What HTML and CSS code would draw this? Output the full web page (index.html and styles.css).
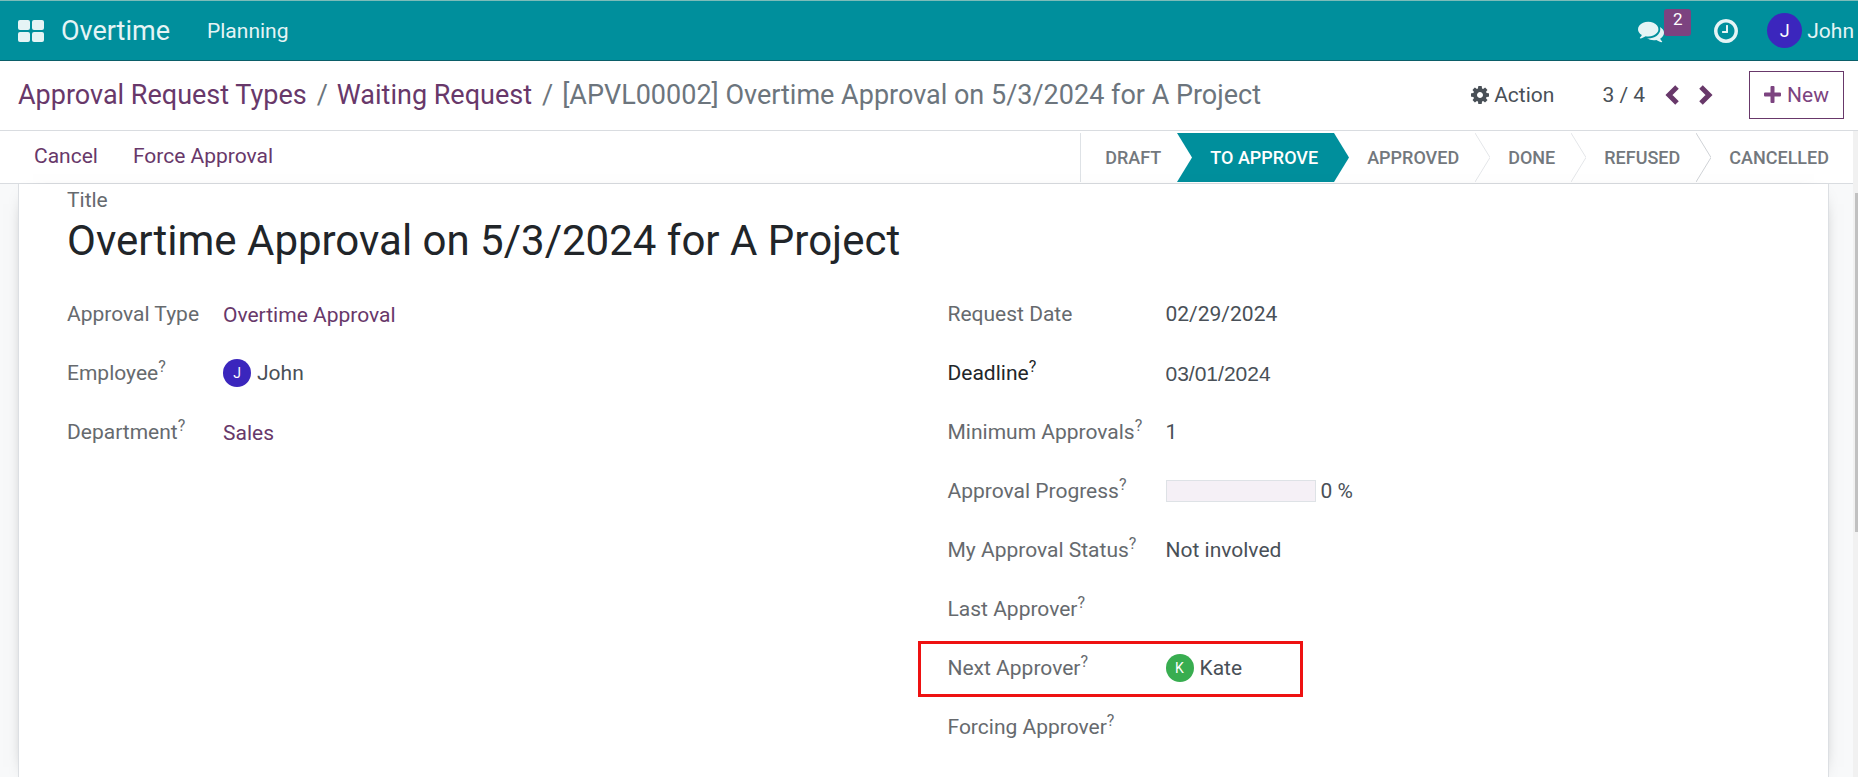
FILE: index.html
```html
<!DOCTYPE html>
<html lang="en">
<head>
<meta charset="utf-8">
<meta name="viewport" content="width=device-width, initial-scale=1">
<title>Overtime Approval</title>
<link rel="stylesheet" href="styles.css">
</head>
<body>
<header class="navbar">
  <button class="icon-button apps" aria-label="Apps">
    <svg width="26" height="22" viewBox="0 0 26 22"><g fill="currentColor"><rect width="12" height="10" rx="2"/><rect x="14" width="12" height="10" rx="2"/><rect y="12" width="12" height="10" rx="2"/><rect x="14" y="12" width="12" height="10" rx="2"/></g></svg>
  </button>
  <a class="brand" href="#">Overtime</a>
  <a class="menu-link" href="#">Planning</a>
  <div class="systray">
    <button class="icon-button messages" aria-label="Messages">
      <svg width="26" height="26" viewBox="0 0 1792 1792"><path fill="currentColor" d="M1408 768q0 139-94 257t-256.500 186.500-353.500 68.500q-86 0-176-16-124 88-278 128-36 9-86 16h-3q-11 0-20.500-8t-11.500-21q-1-3-1-6.500t.5-6.500 2-6l2.500-5 3.500-5.500 4-5 4.500-5 4-4.500q5-6 23-25t26-29.500 22.500-29 25-38.500 20.500-44q-124-72-195-177t-71-224q0-139 94-257t256.500-186.500 353.500-68.500 353.500 68.500 256.500 186.500 94 257zm384 256q0 120-71 224.500t-195 176.500q10 24 20.500 44t25 38.500 22.500 29 26 29.500 23 25q1 1 4 4.500t4.500 5 4 5 3.500 5.500l2.500 5 2 6 .5 6.500-1 6.500q-3 14-13 22t-22 7q-50-7-86-16-154-40-278-128-90 16-176 16-271 0-472-132 58 4 88 4 161 0 309-45t264-129q125-92 192-212t67-254q0-77-23-152 129 71 204 178t75 230z"/></svg>
      <span class="badge">2</span>
    </button>
    <button class="icon-button" aria-label="Activities">
      <svg width="24" height="24" viewBox="128 128 1536 1536"><path fill="currentColor" d="M1024 544v448q0 14-9 23t-23 9h-320q-14 0-23-9t-9-23v-64q0-14 9-23t23-9h224v-352q0-14 9-23t23-9h64q14 0 23 9t9 23zm416 352q0-148-73-273t-198-198-273-73-273 73-198 198-73 273 73 273 198 198 273 73 273-73 198-198 73-273zm224 0q0 209-103 385.500t-279.500 279.500-385.500 103-385.500-103-279.500-279.500-103-385.500 103-385.500 279.500-279.500 385.500-103 385.500 103 279.500 279.500 103 385.500z"/></svg>
    </button>
    <button class="icon-button user"><span class="avatar avatar-large">J</span>John</button>
  </div>
</header>

<div class="control-panel">
  <nav class="breadcrumb" aria-label="Breadcrumb">
    <a href="#">Approval Request Types</a><span class="separator">/</span><a href="#">Waiting Request</a><span class="separator">/</span><span>[APVL00002] Overtime Approval on 5/3/2024 for A Project</span>
  </nav>
  <button class="action">
    <svg width="18" height="18" viewBox="128 128 1536 1536"><path fill="currentColor" d="M1152 896q0-106-75-181t-181-75-181 75-75 181 75 181 181 75 181-75 75-181zm512-109v222q0 12-8 23t-20 13l-185 28q-19 54-39 91 35 50 107 138 10 12 10 25t-9 23q-27 37-99 108t-94 71q-12 0-26-9l-138-108q-44 23-91 38-16 136-29 186-7 28-36 28h-222q-14 0-24.500-8.500t-11.500-21.500l-28-184q-49-16-90-37l-141 107q-10 9-25 9-14 0-25-11-126-114-165-168-7-10-7-23 0-12 8-23 15-21 51-66.500t54-70.500q-27-50-41-99l-183-27q-13-2-21-12.500t-8-23.500v-222q0-12 8-23t19-13l186-28q14-46 39-92-40-57-107-138-10-12-10-24 0-10 9-23 26-36 98.500-107.500t94.500-71.500q13 0 26 10l138 107q44-23 91-38 16-136 29-186 7-28 36-28h222q14 0 24.500 8.500t11.500 21.500l28 184q49 16 90 37l142-107q9-9 24-9 13 0 25 10 129 119 165 170 7 8 7 22 0 12-8 23-15 21-51 66.500t-54 70.500q26 50 41 98l183 28q13 2 21 12.500t8 23.500z"/></svg>Action
  </button>
  <div class="pager">
    <span class="pager-count">3 / 4</span>
    <button class="pager-button" aria-label="Previous"><svg width="14" height="20" viewBox="0 0 14 20"><path d="M12 2 4 10l8 8" fill="none" stroke="currentColor" stroke-width="5"/></svg></button>
    <button class="pager-button" aria-label="Next"><svg width="14" height="20" viewBox="0 0 14 20"><path d="m2 2 8 8-8 8" fill="none" stroke="currentColor" stroke-width="5"/></svg></button>
  </div>
  <button class="new-button"><svg width="17" height="17" viewBox="0 0 17 17"><path d="M7.500 0h2q1 0 1 1v5.500H16q1 0 1 1v2q0 1-1 1h-5.500V16q0 1-1 1h-2q-1 0-1-1v-5.500H1q-1 0-1-1v-2q0-1 1-1h5.500V1q0-1 1-1z" fill="currentColor"/></svg>New</button>
</div>

<div class="workspace">
  <main class="form-view">
    <div class="statusbar">
      <div class="status-actions">
        <button>Cancel</button>
        <button>Force Approval</button>
      </div>
      <div class="stages">
        <button class="stage">Draft<svg class="before-current" width="15" height="49" viewBox="0 0 15 49"><path d="M0 0 15 24.500 0 49z" fill="#fff"/></svg></button>
        <button class="stage current" aria-current="step">To Approve<svg width="15" height="49" viewBox="0 0 15 49"><path d="M0 0 15 24.500 0 49z" fill="#008f9c"/></svg></button>
        <button class="stage">Approved<svg width="15" height="49" viewBox="0 0 15 49"><path d="M0 0 15 24.500 0 49" fill="none" stroke="#e4e6e9"/></svg></button>
        <button class="stage">Done<svg width="15" height="49" viewBox="0 0 15 49"><path d="M0 0 15 24.500 0 49" fill="none" stroke="#e4e6e9"/></svg></button>
        <button class="stage">Refused<svg width="15" height="49" viewBox="0 0 15 49"><path d="M0 0 15 24.500 0 49" fill="none" stroke="#cfd2d6"/></svg></button>
        <button class="stage">Cancelled</button>
      </div>
    </div>
    <div class="sheet-background">
      <section class="sheet">
        <div class="title-label">Title</div>
        <h1>Overtime Approval on 5/3/2024 for A Project</h1>
        <div class="groups">
          <div class="group group-left">
            <div class="field"><span class="label">Approval Type</span><a href="#">Overtime Approval</a></div>
            <div class="field"><span class="label">Employee<sup>?</sup></span><span class="person"><span class="avatar">J</span>John</span></div>
            <div class="field"><span class="label">Department<sup>?</sup></span><a href="#">Sales</a></div>
          </div>
          <div class="group group-right">
            <div class="field"><span class="label">Request Date</span><span>02/29/2024</span></div>
            <div class="field"><label class="label required" for="deadline">Deadline<sup>?</sup></label><input id="deadline" type="text" value="03/01/2024"></div>
            <div class="field"><span class="label">Minimum Approvals<sup>?</sup></span><span>1</span></div>
            <div class="field"><span class="label">Approval Progress<sup>?</sup></span><span class="progress"><span class="progress-bar" role="progressbar" aria-label="Approval Progress" aria-valuenow="0"></span>0 %</span></div>
            <div class="field"><span class="label">My Approval Status<sup>?</sup></span><span>Not involved</span></div>
            <div class="field"><span class="label">Last Approver<sup>?</sup></span></div>
            <div class="field highlighted"><span class="label">Next Approver<sup>?</sup></span><span class="person"><span class="avatar avatar-green">K</span>Kate</span></div>
            <div class="field"><span class="label">Forcing Approver<sup>?</sup></span></div>
          </div>
        </div>
      </section>
    </div>
  </main>
  <div class="scroll-track"><div class="scroll-thumb"></div></div>
</div>
</body>
</html>
```

FILE: styles.css
```css
*, *::after { box-sizing: border-box; }

body {
  margin: 0;
  height: 100vh;
  display: flex;
  flex-direction: column;
  overflow: hidden;
  background: #fff;
  color: #495057;
  font-family: Roboto, "Liberation Sans", sans-serif;
  font-size: 21px;
  line-height: 32px;
}

button {
  margin: 0;
  padding: 0;
  border: 0;
  background: none;
  color: inherit;
  font: inherit;
  white-space: nowrap;
  cursor: pointer;
}

svg { display: block; flex: none; }

a { color: #68386a; text-decoration: none; }

/* Top bar */
.navbar {
  flex: none;
  display: flex;
  align-items: center;
  height: 61px;
  padding: 0 4px 0 18px;
  border-top: 1px solid #7dbcb9;
  border-bottom: 1px solid #0b5f69;
  background: #008f9c;
  color: #e5f4f5;
}
.navbar a { color: inherit; }
.icon-button { display: flex; align-items: center; }
.brand { margin-left: 17px; font-size: 27px; }
.menu-link { margin-left: 37px; }
.systray { display: flex; align-items: center; margin-left: auto; }
.messages { position: relative; margin-right: 50px; }
.badge {
  position: absolute;
  left: 26px;
  top: -9px;
  width: 27px;
  height: 27px;
  border-radius: 3px;
  background: #7c4380;
  color: #fff;
  font-size: 17px;
  line-height: 21px;
  text-align: center;
}
.user { gap: 5px; margin-left: 29px; }

.avatar {
  flex: none;
  width: 28px;
  height: 28px;
  border-radius: 50%;
  background: #3b26bd;
  color: #fff;
  font-size: 14px;
  line-height: 29px;
  text-align: center;
}
.avatar-large { width: 35px; height: 35px; font-size: 18px; line-height: 36px; }
.avatar-green { background: #38ad50; }

/* Breadcrumb and pager */
.control-panel {
  flex: none;
  display: flex;
  align-items: center;
  height: 70px;
  padding: 0 14px 2px 18px;
  border-bottom: 1px solid #d9dce0;
}
.breadcrumb {
  display: flex;
  margin-right: auto;
  color: #6c757d;
  font-size: 27px;
  white-space: nowrap;
}
.separator { margin: 0 9px 0 10px; }
.action { display: flex; align-items: center; gap: 5px; }
.pager { display: flex; align-items: center; margin: 0 36px 0 48px; color: #68386a; }
.pager-count { color: #495057; }
.pager-button { margin-left: 20px; }
.new-button {
  display: flex;
  align-items: center;
  gap: 6px;
  height: 48px;
  padding: 0 14px;
  border: 1px solid #68386a;
  color: #7c4380;
}

/* Scrolling area */
.workspace { flex: 1; min-height: 0; display: flex; }
.form-view { flex: 1; min-width: 0; display: flex; flex-direction: column; }
.scroll-track {
  flex: none;
  width: 5px;
  padding: 62px 0 0 2px;
  background: #f1f1f1;
}
.scroll-thumb { height: 58%; background: #c1c1c1; }

.statusbar {
  flex: none;
  display: flex;
  align-items: center;
  justify-content: space-between;
  padding: 2px 0 1px 34px;
  border-bottom: 1px solid #d9dce0;
}
.status-actions { display: flex; gap: 35px; padding-bottom: 3px; color: #68386a; }
.stages { display: flex; border-left: 1px solid #dee2e6; }
.stage {
  display: flex;
  align-items: center;
  gap: 16px;
  padding-left: 18px;
  color: #73787d;
  font-size: 18px;
  font-weight: 500;
  line-height: 49px;
  text-transform: uppercase;
}
.stage:first-child { padding-left: 24px; }
.stage:last-child { padding-right: 24px; }
.current { background: linear-gradient(to left, #fff 15px, #008f9c 15px); color: #fff; }
.before-current { background: #008f9c; }

/* Form sheet */
.sheet-background {
  flex: 1;
  min-height: 0;
  display: flex;
  padding: 0 24px 0 18px;
  background: #f8f9fa;
}
.sheet {
  flex: 1;
  padding: 0 48px;
  border: solid #dcdfe3;
  border-width: 0 1px;
  background: #fff;
  box-shadow: 0 5px 20px -15px #000;
}
.title-label { color: #666a6e; }
h1 {
  margin: 0 0 18px;
  color: #212529;
  font-size: 42px;
  font-weight: 400;
  line-height: 50px;
}
.groups { display: grid; grid-template-columns: 1fr 1fr; gap: 48px; }
.field { display: grid; align-items: center; height: 59px; }
.group-left .field { grid-template-columns: 156px 1fr; }
.group-right .field { grid-template-columns: 218px 1fr; }
.field a, .field input { padding: 2px 0 0; }
.label { color: #666a6e; white-space: nowrap; }
.required { color: #212529; }
sup { font-size: 16px; line-height: 0; }
.field input {
  width: 100%;
  border: 0;
  outline: 0;
  background: none;
  color: inherit;
  font-family: "Liberation Sans", sans-serif;
  font-size: 21px;
}
.person { display: flex; align-items: center; gap: 6px; }
.progress { display: flex; align-items: center; gap: 5px; }
.progress-bar { width: 150px; height: 22px; border: 1px solid #dee2e6; background: #f5f0f6; }

.highlighted { position: relative; }
.highlighted::after {
  content: "";
  position: absolute;
  left: -30px;
  top: 3px;
  width: 385px;
  height: 56px;
  border: 3px solid #ee1111;
  pointer-events: none;
}
```
